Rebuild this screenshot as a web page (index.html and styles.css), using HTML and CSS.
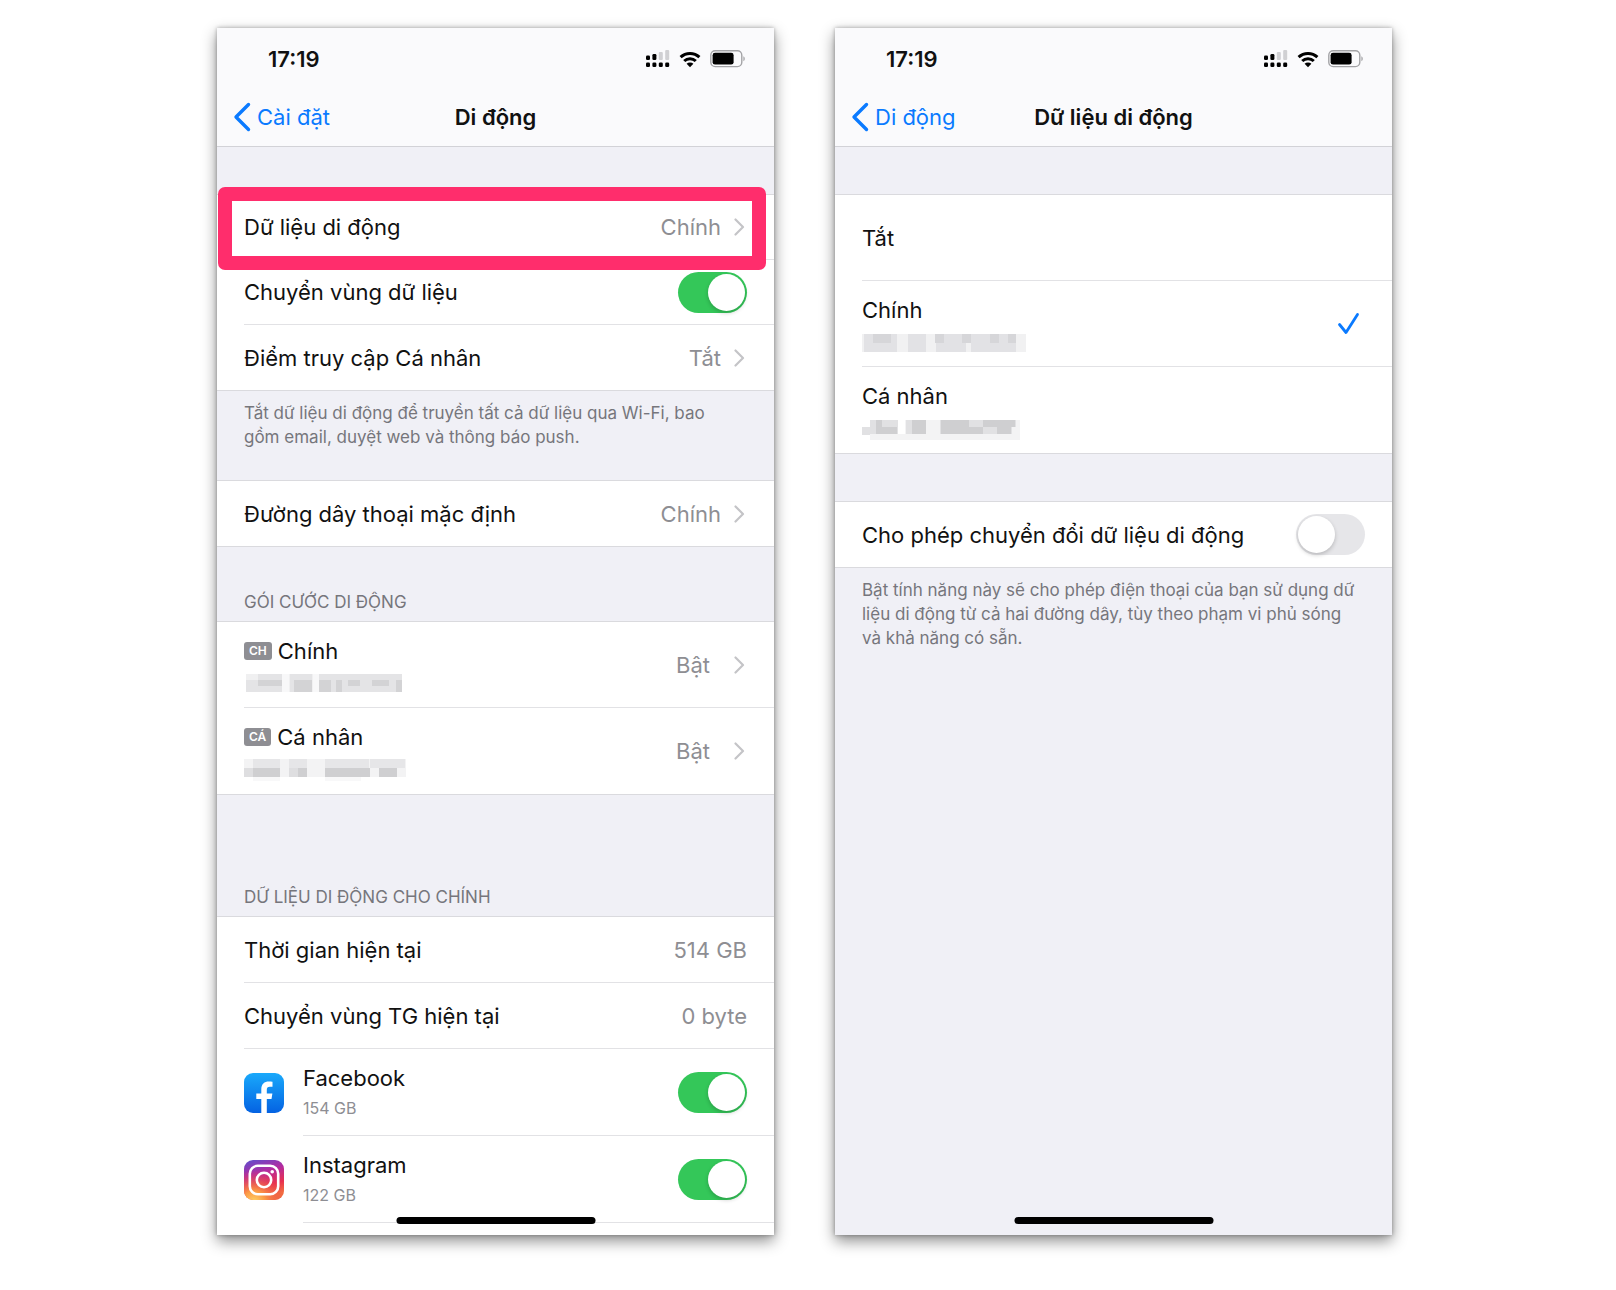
FILE: index.html
```html
<!DOCTYPE html>
<html lang="vi">
<head>
  <meta charset="UTF-8">
  <meta name="viewport" content="width=device-width, initial-scale=1">
  <title>Dữ liệu di động</title>
  <link rel="stylesheet" href="styles.css">
</head>
<body>

  <!-- Icons used more than once -->
  <svg class="sprite" aria-hidden="true">
    <symbol id="signal" viewBox="0 0 24 18">
      <g fill="#000">
        <rect x="0" y="12.400" width="4" height="4.600" rx="1.300"/>
        <rect x="6.400" y="12.400" width="4" height="4.600" rx="1.300"/>
        <rect x="12.800" y="12.400" width="4" height="4.600" rx="1.300"/>
        <rect x="19.200" y="12.400" width="4" height="4.600" rx="1.300"/>
        <rect x="0" y="5.600" width="4" height="4.400" rx="1.300"/>
        <rect x="6.400" y="4" width="4" height="6" rx="1.300"/>
      </g>
      <g fill="#d0d0d3">
        <rect x="12.800" y="2" width="4" height="8" rx="1"/>
        <rect x="19.200" y="0" width="4" height="10" rx="1"/>
      </g>
    </symbol>
    <symbol id="wifi" viewBox="0 0 22 17">
      <path d="M1.6 6.2a13.6 13.6 0 0 1 18.8 0M5.2 10a8.4 8.4 0 0 1 11.6 0" fill="none" stroke="#000" stroke-width="3"/>
      <path d="M11 16.2 7.6 12.8a4.8 4.8 0 0 1 6.8 0z" fill="#000"/>
    </symbol>
    <symbol id="battery" viewBox="0 0 35 18">
      <rect x=".8" y=".8" width="31" height="15.8" rx="4.4" fill="none" stroke="#a3a3a6" stroke-width="1.4"/>
      <rect x="2.6" y="2.8" width="21" height="11.8" rx="2.4" fill="#000"/>
      <path d="M33.4 6.2c1.8.8 1.8 4.2 0 5z" fill="#a3a3a6"/>
    </symbol>
    <symbol id="back" viewBox="0 0 18 30">
      <path d="M15.5 2.5 3 15l12.500 12.500" fill="none" stroke="#0a7aff" stroke-width="3.400" stroke-linecap="round" stroke-linejoin="round"/>
    </symbol>
    <symbol id="chevron" viewBox="0 0 11 18">
      <path d="M1.500 1.500 9 9l-7.500 7.500" fill="none" stroke="#c4c4c7" stroke-width="2.200" stroke-linecap="round" stroke-linejoin="round"/>
    </symbol>
  </svg>

  <main class="screens">

    <!-- ===== Di động ===== -->
    <section class="phone">
      <header class="topbar">
        <div class="status">
          <span class="time">17:19</span>
          <svg width="24" height="18"><use href="#signal"/></svg>
          <svg width="22" height="17"><use href="#wifi"/></svg>
          <svg width="35" height="18"><use href="#battery"/></svg>
        </div>
        <nav class="nav">
          <a class="back" href="#"><svg width="18" height="30"><use href="#back"/></svg>Cài đặt</a>
          <h1>Di động</h1>
        </nav>
      </header>

      <ul class="group first">
        <li class="highlight">
          <a class="cell" href="#"><span class="name">Dữ liệu di động</span><span class="value">Chính</span><svg class="chevron"><use href="#chevron"/></svg></a>
        </li>
        <li>
          <label class="cell"><span class="name">Chuyển vùng dữ liệu</span><input class="toggle" type="checkbox" checked></label>
        </li>
        <li>
          <a class="cell" href="#"><span class="name">Điểm truy cập Cá nhân</span><span class="value">Tắt</span><svg class="chevron"><use href="#chevron"/></svg></a>
        </li>
      </ul>
      <p class="note">Tắt dữ liệu di động để truyền tất cả dữ liệu qua Wi-Fi, bao gồm email, duyệt web và thông báo push.</p>

      <ul class="group">
        <li>
          <a class="cell" href="#"><span class="name">Đường dây thoại mặc định</span><span class="value">Chính</span><svg class="chevron"><use href="#chevron"/></svg></a>
        </li>
      </ul>

      <h2 class="heading">GÓI CƯỚC DI ĐỘNG</h2>
      <ul class="group">
        <li>
          <a class="cell tall" href="#">
            <span class="name">
              <span class="line"><span class="badge">CH</span>Chính</span>
              <svg class="masked" viewBox="0 -3 162 28">
                <path fill="#f0f0f1" d="M2 6h154v18H2z"/>
                <path fill="#e4e4e6" d="M2 12h36v12H2zM14 6h24v6H14zM46 6h22v18H46zM74 6h84v18H74z"/>
                <path fill="#d3d3d5" d="M14 12h24v6H14zM50 12h18v12H50zM75 12h12v12H75zM104 12h12v6h-12zM128 12h17v6h-17zM152 12h6v12h-6zM92 12h6v12h-6z"/>
                <path fill="#f8f8f9" d="M38 6h7v18h-7zM69 6h6v18h-6z"/>
              </svg>
            </span>
            <span class="value wide">Bật</span><svg class="chevron"><use href="#chevron"/></svg>
          </a>
        </li>
        <li>
          <a class="cell tall" href="#">
            <span class="name">
              <span class="line"><span class="badge">CÁ</span>Cá nhân</span>
              <svg class="masked" viewBox="0 -3 162 28">
                <path fill="#f3f3f4" d="M0 5h162v18H0z"/>
                <path fill="#e6e6e8" d="M9 5h27v9H9zM45 5h18v9H45zM81 5h44v9H81zM126 5h35v9h-35z"/>
                <path fill="#dedee0" d="M0 14h36v9H0zM45 14h18v9H45z"/>
                <path fill="#cfcfd1" d="M9 14h27v9H9zM54 14h9v9h-9zM81 14h45v9H81zM135 14h18v9h-18z"/>
                <path fill="#f8f8f9" d="M9 23h27v4H9zM81 23h36v4H81z"/>
              </svg>
            </span>
            <span class="value wide">Bật</span><svg class="chevron"><use href="#chevron"/></svg>
          </a>
        </li>
      </ul>

      <h2 class="heading far">DỮ LIỆU DI ĐỘNG CHO CHÍNH</h2>
      <ul class="group last">
        <li><div class="cell"><span class="name">Thời gian hiện tại</span><span class="value">514 GB</span></div></li>
        <li><div class="cell"><span class="name">Chuyển vùng TG hiện tại</span><span class="value">0 byte</span></div></li>
        <li>
          <svg class="app" viewBox="0 0 40 40" aria-hidden="true">
            <defs>
              <linearGradient id="fb" x1="0" y1="0" x2="0" y2="1"><stop offset="0" stop-color="#19a9fb"/><stop offset="1" stop-color="#0462e2"/></linearGradient>
            </defs>
            <rect width="40" height="40" rx="9" fill="url(#fb)"/>
            <path d="M17.300 40V26h-5v-5.600h5v-4c0-5.400 3-8 7.600-8 1.500 0 3 .2 3.600.3v5h-2.600c-2.300 0-3.100 1.200-3.100 3v3.700h5.600l-.9 5.600h-4.700v14z" fill="#fff"/>
          </svg>
          <label class="cell tall">
            <span class="name">Facebook<small>154 GB</small></span><input class="toggle" type="checkbox" checked>
          </label>
        </li>
        <li>
          <svg class="app" viewBox="0 0 40 40" aria-hidden="true">
            <defs>
              <linearGradient id="ig" x1="0" y1="0" x2=".3" y2="1"><stop offset="0" stop-color="#5b4fd0"/><stop offset=".4" stop-color="#b32ba0"/><stop offset=".75" stop-color="#e8304f"/><stop offset="1" stop-color="#f2703f"/></linearGradient>
              <radialGradient id="igWarm" cx=".25" cy="1.050" r=".8"><stop offset="0" stop-color="#ffd567"/><stop offset=".35" stop-color="#fb9a45"/><stop offset="1" stop-color="#e8304f" stop-opacity="0"/></radialGradient>
            </defs>
            <rect width="40" height="40" rx="9" fill="url(#ig)"/>
            <rect width="40" height="40" rx="9" fill="url(#igWarm)"/>
            <g fill="none" stroke="#fff" stroke-width="2.600">
              <rect x="5.800" y="5.800" width="28.400" height="28.400" rx="8"/>
              <circle cx="20" cy="20" r="7.200"/>
            </g>
            <circle cx="28.200" cy="11.800" r="1.800" fill="#fff"/>
          </svg>
          <label class="cell tall">
            <span class="name">Instagram<small>122 GB</small></span><input class="toggle" type="checkbox" checked>
          </label>
        </li>
      </ul>
      <div class="home"></div>
    </section>

    <!-- ===== Dữ liệu di động ===== -->
    <section class="phone">
      <header class="topbar">
        <div class="status">
          <span class="time">17:19</span>
          <svg width="24" height="18"><use href="#signal"/></svg>
          <svg width="22" height="17"><use href="#wifi"/></svg>
          <svg width="35" height="18"><use href="#battery"/></svg>
        </div>
        <nav class="nav">
          <a class="back" href="#"><svg width="18" height="30"><use href="#back"/></svg>Di động</a>
          <h1>Dữ liệu di động</h1>
        </nav>
      </header>

      <ul class="group first">
        <li>
          <label class="cell tall"><span class="name">Tắt</span><input class="pick" type="radio" name="line"></label>
        </li>
        <li>
          <label class="cell tall">
            <span class="name">
              <span class="line">Chính</span>
              <svg class="masked" viewBox="0 -5 162 28">
                <path fill="#f1f1f2" d="M0 5h164v18H0z"/>
                <path fill="#e2e2e5" d="M2 5h33v18H2zM46 5h18v18H46zM74 5h30v18H74zM104 5h50v9h-50zM109 14h45v9h-45z"/>
                <path fill="#d6d6d9" d="M11 5h18v9H11zM73 5h9v9h-9zM100 5h9v9h-9zM128 5h9v9h-9zM146 5h8v9h-8z"/>
              </svg>
            </span>
            <input class="pick" type="radio" name="line" checked>
            <svg class="check" viewBox="0 0 24 24"><path d="m2.500 12.500 6.500 8L20.500 2.500" fill="none" stroke="#0a7aff" stroke-width="2.800" stroke-linecap="round" stroke-linejoin="round"/></svg>
          </label>
        </li>
        <li>
          <label class="cell tall">
            <span class="name">
              <span class="line">Cá nhân</span>
              <svg class="masked" viewBox="0 -5 162 28">
                <path fill="#f3f3f4" d="M8 5h150v20H8z"/>
                <path fill="#e1e1e3" d="M0 12h8v8H0zM8 5h28v14H8zM44 5h20v14H44zM78 5h76v7H78zM78 12h72v7H78z"/>
                <path fill="#cfcfd1" d="M14 5h6v14h-6zM20 12h15v7H20zM50 5h14v14H50zM79 5h28v14H79zM107 12h14v7h-14zM121 5h32v7h-32zM135 12h14v7h-14z"/>
                <path fill="#fff" d="M36 5h7v14h-7z"/>
              </svg>
            </span>
            <input class="pick" type="radio" name="line">
          </label>
        </li>
      </ul>

      <ul class="group spaced">
        <li>
          <label class="cell"><span class="name">Cho phép chuyển đổi dữ liệu di động</span><input class="toggle" type="checkbox"></label>
        </li>
      </ul>
      <p class="note">Bật tính năng này sẽ cho phép điện thoại của bạn sử dụng dữ liệu di động từ cả hai đường dây, tùy theo phạm vi phủ sóng và khả năng có sẵn.</p>
      <div class="home"></div>
    </section>

  </main>
</body>
</html>
```

FILE: styles.css
```css
* {
  box-sizing: border-box;
}

body {
  margin: 0;
  background: #fff;
  color: #111;
  font-family: Inter, Roboto, sans-serif;
  font-size: 22px;
  line-height: 28px;
}

a {
  color: inherit;
  text-decoration: none;
}

h1, h2, p, ul {
  margin: 0;
  padding: 0;
}

.sprite {
  position: absolute;
  width: 0;
  height: 0;
}

.screens {
  display: grid;
  grid-template-columns: 1fr 1fr;
  gap: 61px;
  min-height: 100vh;
  max-width: 1616px;
  margin: 0 auto;
  padding: 28px 224px 55px 217px;
}

.phone {
  position: relative;
  background: #f0f0f6;
  box-shadow: 0 6px 14px rgba(0, 0, 0, 0.45), 0 0 4px rgba(0, 0, 0, 0.3);
}

/* ===== Top bar ===== */
.topbar {
  background: #fafafc;
  border-bottom: 1px solid #d2d2d7;
}

.status {
  display: flex;
  align-items: center;
  gap: 9px;
  height: 62px;
  padding: 0 29px 0 51px;
}

.time {
  flex: 1;
  font-weight: 600;
}

.nav {
  display: grid;
  grid-template-columns: 1fr auto 1fr;
  align-items: center;
  height: 56px;
  padding: 0 16px 3px;
}

.nav h1 {
  font-size: 22px;
  font-weight: 600;
}

.back {
  display: flex;
  align-items: center;
  gap: 6px;
  color: #0a7aff;
}

/* ===== Lists ===== */
.group {
  list-style: none;
  background: #fff;
  border-top: 1px solid #dadade;
  border-bottom: 1px solid #dadade;
}

.first {
  margin-top: 47px;
}

.spaced {
  margin-top: 47px;
}

.last {
  padding-bottom: 12px;
  border-bottom: 0;
}

.group li {
  position: relative;
  display: flex;
  align-items: center;
  gap: 19px;
  padding-left: 27px;
}

.cell {
  flex: 1;
  display: flex;
  align-items: center;
  min-height: 65px;
  padding-right: 27px;
}

.cell.tall {
  min-height: 86px;
}

.group li:not(:last-child) .cell,
.last .cell {
  border-bottom: 1px solid #e2e2e5;
}

.last .cell {
  min-height: 66px;
}

.last .cell.tall {
  min-height: 87px;
}

.name {
  flex: 1;
}

.last .tall .name {
  padding-top: 3px;
}

.name small {
  display: block;
  color: #8e8e93;
  font-size: 16px;
  line-height: 32px;
}

.line {
  display: flex;
  align-items: center;
  gap: 6px;
}

.value {
  color: #8e8e93;
}

.value.wide {
  margin-right: 11px;
}

.chevron {
  width: 11px;
  height: 18px;
  margin: 0 2px 0 13px;
}

.badge {
  padding: 0 5px;
  border-radius: 3px;
  background: #8e8e93;
  color: #fff;
  font-size: 12px;
  font-weight: 600;
  line-height: 18px;
}

.masked {
  display: block;
  width: 162px;
  height: 28px;
  overflow: visible;
}

.app {
  width: 40px;
  height: 40px;
}

.note {
  padding: 10px 32px 31px 27px;
  color: #76767c;
  font-size: 17px;
  line-height: 24px;
}

.heading {
  padding: 43px 27px 7px;
  color: #76767c;
  font-size: 17px;
  font-weight: 400;
  line-height: 24px;
}

.heading.far {
  padding-top: 90px;
}

/* ===== Controls ===== */
.toggle {
  appearance: none;
  width: 69px;
  height: 41px;
  margin: 0;
  padding: 2px;
  border-radius: 21px;
  background: #e6e6e9;
}

.toggle::before {
  content: "";
  display: block;
  width: 37px;
  height: 37px;
  border-radius: 50%;
  background: #fff;
  box-shadow: 0 2px 4px rgba(0, 0, 0, 0.2);
}

.toggle:checked {
  background: #34c759;
}

.toggle:checked::before {
  margin-left: auto;
}

.pick {
  appearance: none;
  margin: 0;
}

.check {
  width: 24px;
  height: 24px;
  margin-right: 4px;
}

/* ===== Overlays ===== */
.highlight::after {
  content: "";
  position: absolute;
  z-index: 1;
  top: -8px;
  right: 8px;
  bottom: -10px;
  left: 1px;
  border: 14px solid #ff2d6c;
  border-radius: 7px;
  pointer-events: none;
}

.home {
  position: absolute;
  bottom: 11px;
  left: 50%;
  width: 199px;
  height: 7px;
  border-radius: 4px;
  background: #000;
  transform: translateX(-50%);
}
```
